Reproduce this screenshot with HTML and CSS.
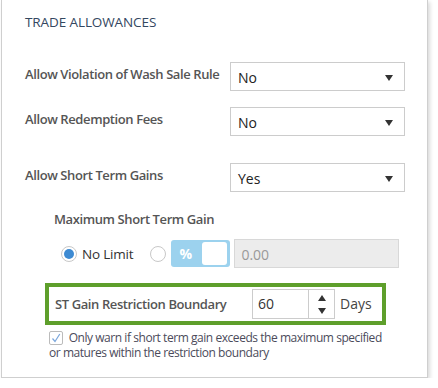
FILE: index.html
```html
<!DOCTYPE html>
<html lang="en">
<head>
  <meta charset="UTF-8" />
  <title>Trade Allowances</title>
  <link rel="stylesheet" href="styles.css">
</head>
<body>

  <div class="panel">
    <h3 class="title">TRADE ALLOWANCES</h3>

    <div class="row first">
      <span class="label">Allow Violation of Wash Sale Rule</span>
      <div class="select"><span>No</span><span class="caret"></span></div>
    </div>

    <div class="row second">
      <span class="label">Allow Redemption Fees</span>
      <div class="select"><span>No</span><span class="caret"></span></div>
    </div>

    <div class="row third">
      <span class="label">Allow Short Term Gains</span>
      <div class="select"><span>Yes</span><span class="caret"></span></div>
    </div>

    <div class="sub">
      <div class="sub-label">Maximum Short Term Gain</div>
      <div class="radios">
        <span class="radio checked"></span>
        <span class="radio-text">No Limit</span>
        <span class="radio"></span>
        <span class="toggle"><b>%</b><i class="knob"></i></span>
        <div class="amount">0.00</div>
      </div>
    </div>

    <div class="boundary">
      <span class="boundary-label">ST Gain Restriction Boundary</span>
      <div class="spin">
        <span class="spin-value">60</span>
        <span class="spin-btns">
          <svg width="8" height="6" viewBox="0 0 8 6"><path d="M4 0 L8 6 L0 6 Z" fill="#333"/></svg>
          <svg width="8" height="6" viewBox="0 0 8 6"><path d="M0 0 L8 0 L4 6 Z" fill="#333"/></svg>
        </span>
      </div>
      <span class="days">Days</span>
    </div>

    <p class="warn">
      <span class="check">
        <svg width="10" height="10" viewBox="0 0 10 10"><path d="M1.5 5.5 L4 8.5 L8.8 1" fill="none" stroke="#7aa6dc" stroke-width="1.2"/></svg>
      </span>
      Only warn if short term gain exceeds the maximum specified or matures within the restriction boundary
    </p>
  </div>

</body>
</html>
```

FILE: styles.css
```css
body {
  margin: 0;
  padding: 0 0 0 1px;
  background: #fff;
  font-family: 'Open Sans', sans-serif;
  color: #333;
}

.panel {
  width: 427px;
  height: 378px;
  box-sizing: border-box;
  border: 1px solid #cfcfcf;
  border-top: none;
  box-shadow: 2px 2px 4px rgba(0,0,0,0.15);
  padding: 0 0 0 23px;
}

.title {
  margin: 0;
  padding-top: 12px;
  font-size: 13.5px;
  line-height: 20px;
  font-weight: normal;
  color: #34475f;
  letter-spacing: -0.1px;
}

.row {
  display: flex;
  align-items: flex-start;
}

.row.first { margin-top: 30px; }
.row.second { margin-top: 16px; }
.row.third { margin-top: 27px; }

.label {
  width: 205px;
  padding-top: 2px;
  font-size: 13px;
  line-height: 20px;
  font-weight: 600;
  color: #555;
  letter-spacing: -0.4px;
}

.select {
  width: 175px;
  height: 29px;
  box-sizing: border-box;
  border: 1px solid #ccc;
  display: flex;
  align-items: center;
  justify-content: space-between;
  padding: 2px 11px 0 7px;
  font-size: 14px;
  color: #222;
}

.caret {
  width: 0;
  height: 0;
  border-left: 4px solid transparent;
  border-right: 4px solid transparent;
  border-top: 6px solid #333;
}

.sub {
  padding-left: 29px;
  margin-top: 17px;
}

.sub-label {
  font-size: 13px;
  line-height: 20px;
  font-weight: 600;
  color: #555;
  letter-spacing: -0.4px;
}

.radios {
  display: flex;
  align-items: center;
  margin-top: 10px;
  padding-left: 7px;
}

.radio {
  width: 14px;
  height: 14px;
  border: 1px solid #c8c8c8;
  border-radius: 50%;
  background: #fff;
  position: relative;
}

.radio.checked::after {
  content: "";
  position: absolute;
  left: 2px;
  top: 2px;
  width: 10px;
  height: 10px;
  border-radius: 50%;
  background: #3d8ad2;
}

.radio-text {
  margin-left: 5px;
  margin-right: 17px;
  font-size: 13.5px;
  letter-spacing: -0.2px;
  color: #333;
}

.toggle {
  margin-left: 5px;
  width: 59px;
  height: 27px;
  box-sizing: border-box;
  border-radius: 3px;
  background: #9cd2ee;
  display: flex;
  align-items: center;
  justify-content: space-between;
  padding: 0 3px 0 8px;
}

.toggle b {
  color: #fff;
  font-size: 14px;
}

.knob {
  width: 25px;
  height: 23px;
  background: #fff;
  border-radius: 3px;
}

.amount {
  margin-left: 4px;
  width: 165px;
  height: 29px;
  box-sizing: border-box;
  background: #ececec;
  border: 1px solid #d8d8d8;
  padding: 5px 6px;
  font-size: 14px;
  color: #999;
}

.boundary {
  margin: 15px 0 0 20px;
  width: 341px;
  height: 42px;
  box-sizing: border-box;
  border: 4px solid #5e9f2b;
  display: flex;
  align-items: center;
  padding-left: 6px;
}

.boundary-label {
  width: 197px;
  flex: none;
  font-size: 13px;
  font-weight: 600;
  color: #555;
  letter-spacing: -0.4px;
}

.spin {
  width: 83px;
  height: 30px;
  box-sizing: border-box;
  border: 1px solid #ccc;
  display: flex;
}

.spin-value {
  width: 56px;
  border-right: 1px solid #ccc;
  padding: 4px 0 0 5px;
  box-sizing: border-box;
  font-size: 14px;
}

.spin-btns {
  flex: 1;
  display: flex;
  flex-direction: column;
  align-items: center;
  justify-content: center;
  gap: 7px;
}

.days {
  margin-left: 5px;
  margin-top: -2px;
  font-size: 14px;
  color: #444;
}

.warn {
  margin: 5px 0 0 24px;
  width: 340px;
  font-size: 12px;
  line-height: 15px;
  letter-spacing: -0.45px;
  color: #4b4b5b;
}

.check {
  display: inline-block;
  width: 14px;
  height: 14px;
  box-sizing: border-box;
  border: 1px solid #bbb;
  border-radius: 2px;
  vertical-align: -3px;
  margin-right: 3px;
  text-align: center;
}

.check svg {
  display: block;
  margin: 1px auto 0;
}
```
